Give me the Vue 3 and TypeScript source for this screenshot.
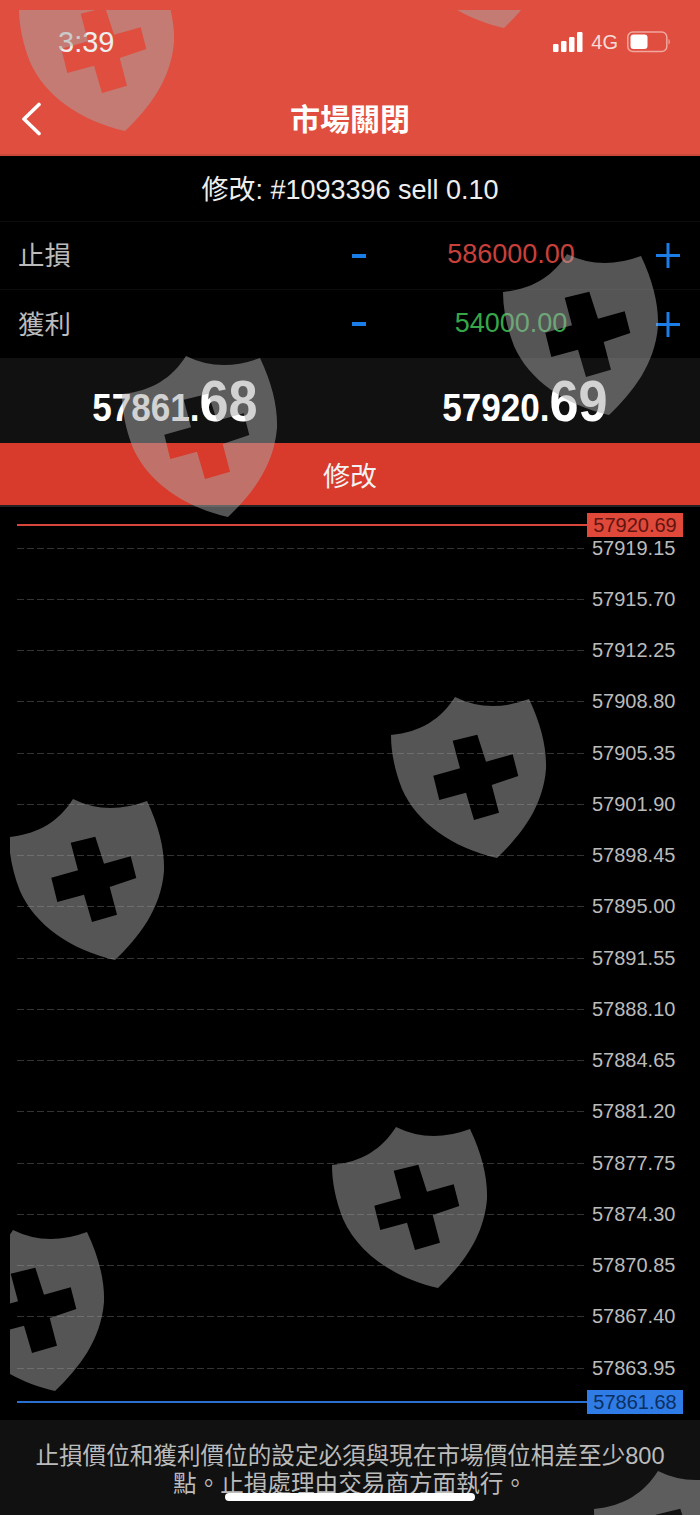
<template>
  <div class="page">
    <header class="top">
      <div class="status">
        <span class="clock">3:39</span>
        <div class="status-right">
          <svg width="31" height="22" viewBox="0 0 31 22" class="signal">
            <rect x="1" y="13" width="5.5" height="8" rx="1.2" />
            <rect x="9" y="10" width="5.5" height="11" rx="1.2" />
            <rect x="17" y="6" width="5.5" height="15" rx="1.2" />
            <rect x="25" y="1" width="5.5" height="20" rx="1.2" />
          </svg>
          <span class="net">4G</span>
          <svg width="43" height="22" viewBox="0 0 43 22" class="battery">
            <rect x="0.8" y="1" width="39" height="19.5" rx="5" fill="none" stroke="#f0a79e" stroke-width="1.5" />
            <rect x="3.5" y="3.5" width="17" height="14.5" rx="3" fill="#fff" />
            <path d="M41.5 8c1 .5 1.3 1.7 1.3 2.8s-.3 2.2-1.3 2.7z" fill="#f0a79e" />
          </svg>
        </div>
      </div>
      <div class="nav">
        <svg class="back" width="22" height="34" viewBox="0 0 22 34">
          <path d="M19 2.5L4 17l15 14.5" fill="none" stroke="#fff" stroke-width="3.6" stroke-linecap="round" stroke-linejoin="round" />
        </svg>
        <span class="title">市場關閉</span>
      </div>
    </header>

    <div class="order">修改: #1093396 sell 0.10</div>

    <div v-for="row in rows" :key="row.label" class="row">
      <span class="row-label">{{ row.label }}</span>
      <div class="stepper">
        <span class="minus"></span>
        <span class="row-value" :class="row.tone">{{ row.value }}</span>
        <svg width="24" height="25" viewBox="0 0 24 25" class="plus">
          <path d="M0 12.5h24M12 0v25" stroke="#1a7de8" stroke-width="3" />
        </svg>
      </div>
    </div>

    <div class="quotes">
      <div v-for="q in quotes" :key="q.big" class="quote">
        <span class="quote-inner"><span class="q-small">{{ q.small }}</span><span class="q-big">{{ q.big }}</span></span>
      </div>
    </div>

    <button class="submit">修改</button>

    <div class="chart">
      <div
        v-for="level in levels"
        :key="level"
        class="level"
        :style="{ top: priceToY(level) + 'px' }"
      >
        <span class="dash"></span>
        <span class="level-label">{{ level.toFixed(2) }}</span>
      </div>
      <div class="level live" :style="{ top: priceToY(57920.69) + 'px' }">
        <span class="live-line red"></span>
        <span class="tag red">57920.69</span>
      </div>
      <div class="level live" :style="{ top: priceToY(57861.68) + 'px' }">
        <span class="live-line blue"></span>
        <span class="tag blue">57861.68</span>
      </div>
    </div>

    <footer class="note">
      止損價位和獲利價位的設定必須與現在市場價位相差至少800點。止損處理由交易商方面執行。
    </footer>

    <!-- 浮水印 -->
    <div class="watermark">
      <svg
        v-for="(s, i) in shields"
        :key="i"
        class="shield"
        :style="{ left: s.x - 10 + 'px', top: s.y - 10 + 'px' }"
        width="156"
        height="162"
        viewBox="0 0 156 162"
      >
        <path
          fill-rule="evenodd"
          d="M64 0Q98 17 138 2Q156 40 155 72C152 110 130 138 106 161C62 151 26 126 11 92C4 74 0 56 0 38C30 35 50 22 64 0ZM61.7 43.7L69 71.3L42.3 78.7L48.3 103L75 95.7L83 123L108 115.7L100.7 88L127.3 79L121.7 57.3L95 64.7L86.3 37.7Z"
        />
      </svg>
    </div>

    <div class="home-bar"></div>
  </div>
</template>

<script setup lang="ts">
const rows = [
  { label: '止損', value: '586000.00', tone: 'loss' },
  { label: '獲利', value: '54000.00', tone: 'gain' },
]

const quotes = [
  { small: '57861.', big: '68' },
  { small: '57920.', big: '69' },
]

// 價格刻度
const firstLevel = 57919.15
const step = 3.45
const stepPx = 51.25
const levels = Array.from({ length: 17 }, (_, i) => firstLevel - i * step)

const priceToY = (price: number) => 41 + ((firstLevel - price) / step) * stepPx

const shields = [
  { x: 19, y: -30 },
  { x: 398, y: -133 },
  { x: 503, y: 254 },
  { x: 122, y: 356 },
  { x: 391, y: 697 },
  { x: 9, y: 799 },
  { x: 332, y: 1127 },
  { x: -51, y: 1230 },
  { x: 594, y: 1471 },
]
</script>

<style>
html,
body {
  background: #000;
}
</style>

<style scoped>
.page {
  position: relative;
  width: 700px;
  height: 1515px;
  overflow: hidden;
  background: #000;
  font-family: "Liberation Sans", "Noto Sans CJK TC", sans-serif;
  display: flex;
  flex-direction: column;
}

.top {
  height: 156px;
  flex: none;
  box-sizing: border-box;
  background: #e04e40;
  border-bottom: 2px solid #c9483b;
  display: flex;
  flex-direction: column;
}

.status {
  height: 84px;
  flex: none;
  display: flex;
  justify-content: space-between;
  align-items: center;
  padding: 0 30px 0 58px;
}

.clock {
  color: #eee;
  font-size: 29px;
}

.status-right {
  display: flex;
  align-items: center;
}

.signal rect {
  fill: #fff;
}

.net {
  color: #f4dcd8;
  font-size: 20px;
  margin: 0 9px 0 8px;
}

.nav {
  position: relative;
  flex: 1;
  display: flex;
  align-items: center;
  justify-content: center;
  padding-bottom: 4px;
}

.back {
  position: absolute;
  left: 20px;
  top: 18px;
}

.title {
  color: #fff;
  font-size: 30px;
  font-weight: 700;
}

.order {
  height: 65px;
  flex: none;
  box-sizing: border-box;
  padding-bottom: 3px;
  display: flex;
  align-items: center;
  justify-content: center;
  color: #eee;
  font-size: 27px;
}

.row {
  height: 68px;
  flex: none;
  display: flex;
  align-items: center;
  justify-content: space-between;
  padding: 0 20px 0 18px;
  border-top: 1px solid #0c0c0c;
}

.order + .row {
  height: 67px;
}

.row-label {
  color: #bbb;
  font-size: 26.5px;
  margin-top: -4px;
}

.stepper {
  width: 328px;
  display: flex;
  align-items: center;
  justify-content: space-between;
}

.minus {
  width: 14px;
  height: 4px;
  background: #1a7de8;
}

.row-value {
  font-size: 27px;
  width: 200px;
  text-align: center;
  margin-top: -2px;
}

.loss {
  color: #c9403a;
}

.gain {
  color: #36a648;
}

.quotes {
  height: 85px;
  flex: none;
  display: grid;
  grid-template-columns: 1fr 1fr;
  background: #111;
}

.quote {
  display: flex;
  justify-content: center;
  align-items: center;
}

.quote-inner {
  display: inline-block;
  color: #fff;
  font-weight: 700;
  white-space: nowrap;
  transform: scaleX(0.9);
}

.q-small {
  font-size: 39px;
}

.q-big {
  font-size: 58px;
}

.submit {
  height: 62px;
  flex: none;
  border: 0;
  padding: 0;
  background: #d83a2b;
  color: #f2f2f2;
  font: inherit;
  font-size: 27px;
}

.chart {
  position: relative;
  flex: 1;
  border-top: 2px solid #222;
}

.level {
  position: absolute;
  left: 17px;
  right: 17px;
  display: flex;
  align-items: center;
  height: 0;
}

.dash {
  flex: 1;
  height: 1px;
  margin-right: 6px;
  background: repeating-linear-gradient(90deg, #333 0 7px, transparent 7px 10px);
}

.level-label {
  width: 84px;
  margin-right: 7px;
  color: #bbb;
  font-size: 20px;
}

.live-line {
  flex: 1;
  height: 2px;
}

.live-line.red {
  background: #d8453a;
}

.live-line.blue {
  background: #2a6fd0;
}

.tag {
  width: 96px;
  height: 24px;
  line-height: 24px;
  text-align: center;
  font-size: 20px;
}

.tag.red {
  background: #e0493a;
  color: #611410;
}

.tag.blue {
  background: #2f7ce6;
  color: #0c2f63;
}

.note {
  height: 95px;
  flex: none;
  box-sizing: border-box;
  background: #111;
  padding: 22px 30px 0;
  text-align: center;
  color: #bbb;
  font-size: 23.6px;
  line-height: 28px;
}

.watermark {
  position: absolute;
  left: 10px;
  top: 10px;
  right: 0;
  bottom: 0;
  overflow: hidden;
  pointer-events: none;
}

.shield {
  position: absolute;
  fill: rgba(167, 167, 167, 0.51);
}

.home-bar {
  position: absolute;
  left: 225px;
  bottom: 14px;
  width: 250px;
  height: 8px;
  border-radius: 4px;
  background: #fff;
}
</style>
